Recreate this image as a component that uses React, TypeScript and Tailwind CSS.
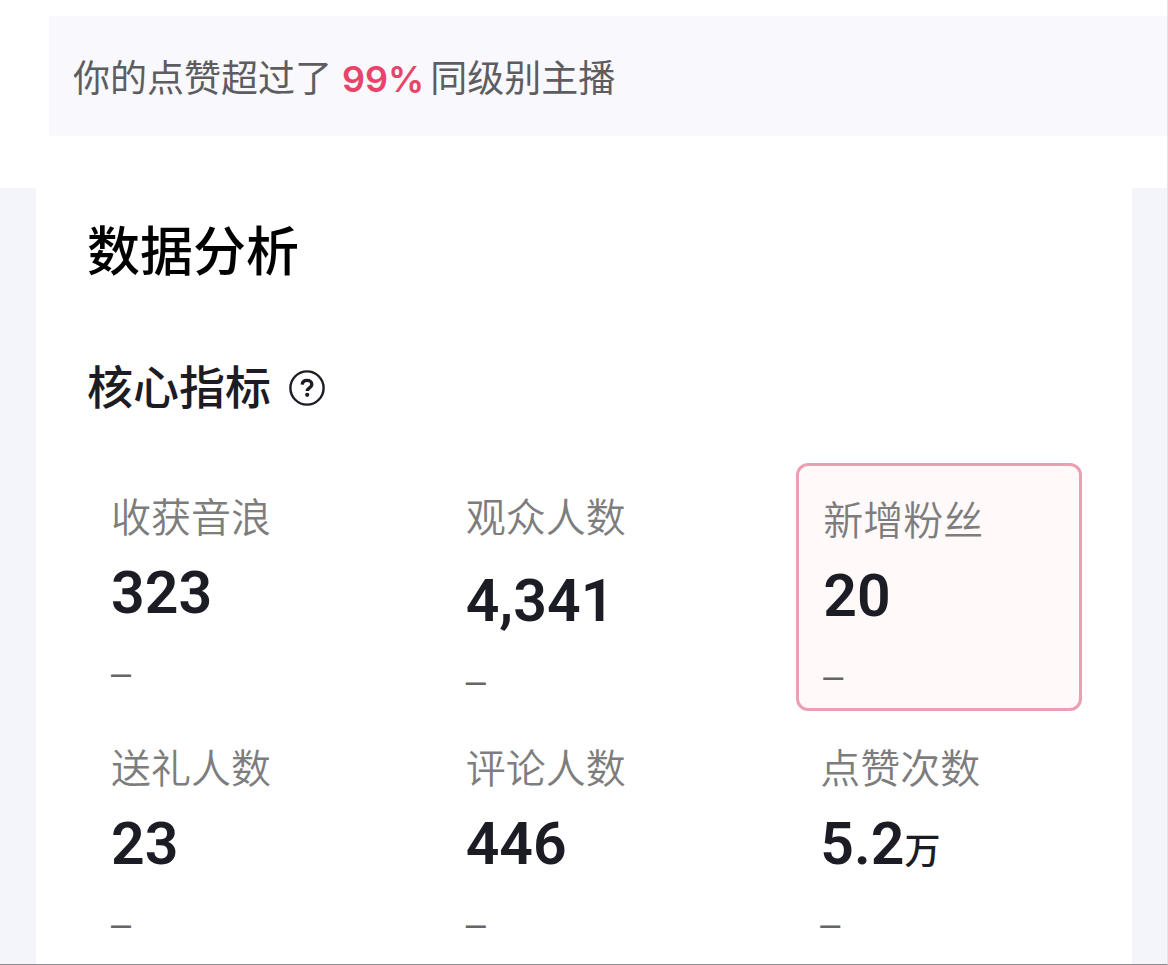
import { cx } from "class-variance-authority";

type Metric = {
    label: string;
    value: string;
    unit?: string;
    active?: boolean;
    grouped?: boolean;
};

const METRICS: Metric[] = [
    { label: "收获音浪", value: "323" },
    { label: "观众人数", value: "4,341", grouped: true },
    { label: "新增粉丝", value: "20", active: true },
    { label: "送礼人数", value: "23" },
    { label: "评论人数", value: "446" },
    { label: "点赞次数", value: "5.2", unit: "万" },
];

function HelpIcon() {
    return (
        <svg viewBox="0 0 36 36" fill="none" className="size-9" aria-hidden="true">
            <circle cx="18" cy="18" r="16.6" stroke="currentColor" strokeWidth="2.4" />
            <path
                d="M13.2 14.6c.2-2.6 2.1-4.2 4.8-4.2 2.8 0 4.8 1.6 4.8 4 0 3.4-4.6 3.4-4.6 6.6"
                stroke="currentColor"
                strokeWidth="3.4"
            />
            <circle cx="18.2" cy="24.8" r="2.1" fill="currentColor" />
        </svg>
    );
}

function MetricCell({ metric }: { metric: Metric }) {
    return (
        <div
            className={cx(
                "px-6 pt-6 pb-1.5",
                metric.active && "rounded-xl border-3 border-[#eb9fb3] bg-[#fff9fa]",
            )}
        >
            <dt className="text-[40px] leading-14 font-[350] text-[#7d7d7d]">
                {metric.label}
            </dt>
            <dd className={cx("mt-[18px]", metric.grouped && "pt-2")}>
                <div className="flex items-baseline font-['Roboto','Noto_Sans_CJK_SC',sans-serif] text-[59px] leading-16 font-semibold text-[#1b1c24]">
                    {metric.value}
                    {metric.unit && (
                        <span className="text-4xl leading-none font-medium">{metric.unit}</span>
                    )}
                </div>
                <div className="mt-6 font-['Liberation_Sans',sans-serif] text-4xl leading-12 text-[#666]">
                    –
                </div>
            </dd>
        </div>
    );
}

export default function App() {
    return (
        <div className="flex min-h-screen flex-col border-r border-b border-r-[#e4e4e8] border-b-[#8c8b90] bg-white font-['Noto_Sans_CJK_SC',sans-serif]">
            <div className="mt-4 mb-[52px] ml-[49px] bg-[#f8f8fd] px-6 py-8">
                <p className="text-[37px] leading-14 text-[#5d5d61]">
                    你的点赞超过了
                    <strong className="mr-1.5 ml-2.5 font-['Inter',sans-serif] text-4xl leading-none font-semibold text-[#e8436a]">
                        99%
                    </strong>
                    同级别主播
                </p>
            </div>
            <div className="flex flex-1 flex-col bg-[#f4f5fb] pr-[35px] pl-9">
                <main className="flex-1 bg-white pt-7 pr-[50px] pl-[51px]">
                    <h1 className="text-[53px] leading-16 font-medium text-black">数据分析</h1>
                    <div className="mt-[76px] flex items-center gap-[18px] text-[#1b1c24]">
                        <h2 className="pb-2 text-[46px] leading-14 font-medium">核心指标</h2>
                        <button type="button" aria-label="指标说明">
                            <HelpIcon />
                        </button>
                    </div>
                    <dl className="mt-[43px] grid grid-cols-3 gap-x-[69px] gap-y-[3px]">
                        {METRICS.map((metric) => (
                            <MetricCell key={metric.label} metric={metric} />
                        ))}
                    </dl>
                </main>
            </div>
        </div>
    );
}
